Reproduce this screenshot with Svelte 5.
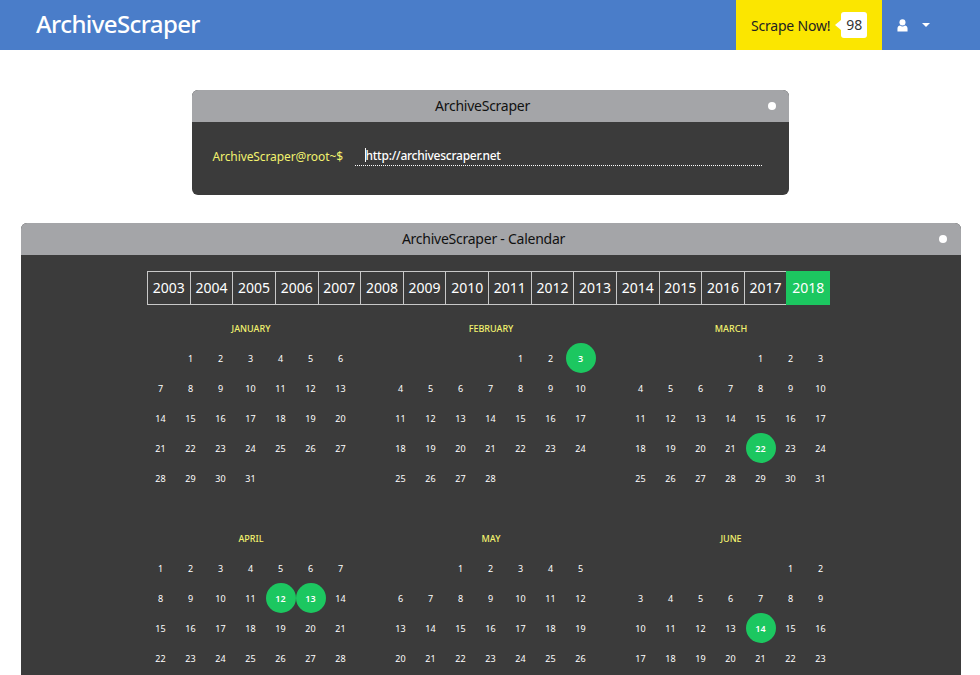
<script lang="ts">
	const years = Array.from({ length: 16 }, (_, i) => 2003 + i);
	const monthNames = ['January', 'February', 'March', 'April', 'May', 'June'];
	const marked: Record<number, number[]> = {
		1: [3],
		2: [22],
		3: [12, 13],
		5: [14]
	};

	function cells(month: number) {
		const blanks = new Date(2018, month, 1).getDay();
		const count = new Date(2018, month + 1, 0).getDate();
		return [
			...Array(blanks).fill(null),
			...Array.from({ length: count }, (_, i) => i + 1)
		];
	}
</script>

<nav class="navbar">
	<a class="brand" href="#top">ArchiveScraper</a>
	<div class="nav-right">
		<a class="scrape" href="#top">
			Scrape Now!
			<span class="badge">98</span>
		</a>
		<button class="user" aria-label="User menu">
			<svg class="user-icon" viewBox="0 0 12 14" width="11" height="13" aria-hidden="true">
				<circle cx="6" cy="3.6" r="3.3" />
				<path d="M0.5 13.5 V10.2 C0.5 8.2 2 7 3.4 7 C4.2 7.7 5 8 6 8 C7 8 7.8 7.7 8.6 7 C10 7 11.5 8.2 11.5 10.2 V13.5 Z" />
			</svg>
			<span class="caret"></span>
		</button>
	</div>
</nav>

<main class="page">
	<section class="terminal small">
		<header class="titlebar">
			<span>ArchiveScraper</span>
			<i class="dot"></i>
		</header>
		<div class="prompt-row">
			<span class="prompt">ArchiveScraper@root~$</span>
			<div class="url"><span class="cursor"></span>http://archivescraper.net</div>
		</div>
	</section>

	<section class="terminal wide">
		<header class="titlebar">
			<span>ArchiveScraper - Calendar</span>
			<i class="dot"></i>
		</header>
		<div class="calendar">
			<div class="years">
				{#each years as year}
					<a class="year" class:active={year === 2018} href="#top">{year}</a>
				{/each}
			</div>
			<div class="months">
				{#each monthNames as name, m}
					<div class="month">
						<div class="month-name">{name}</div>
						<div class="days">
							{#each cells(m) as day}
								<span class="day" class:hit={day && marked[m]?.includes(day)}>{day ?? ''}</span>
							{/each}
						</div>
					</div>
				{/each}
			</div>
		</div>
	</section>
</main>

<style>
	:global(body) {
		margin: 0;
		background: #fff;
		font-family: "Noto Sans", "Open Sans", sans-serif;
		overflow: hidden;
	}

	.navbar {
		display: flex;
		justify-content: space-between;
		height: 50px;
		background: #4a7dc9;
	}

	.brand {
		padding-left: 36px;
		line-height: 48px;
		font-size: 24px;
		font-weight: 500;
		letter-spacing: -0.6px;
		color: #fff;
		text-decoration: none;
	}

	.nav-right {
		display: flex;
	}

	.scrape {
		display: flex;
		align-items: center;
		width: 146px;
		box-sizing: border-box;
		padding-left: 15px;
		background: #fbe600;
		color: #222;
		font-size: 14px;
		letter-spacing: -0.2px;
		text-decoration: none;
	}

	.badge {
		position: relative;
		margin-left: 11px;
		width: 26px;
		height: 26px;
		line-height: 26px;
		text-align: center;
		background: #fff;
		border-radius: 3px;
		color: #333;
		letter-spacing: 0;
	}

	.badge::before {
		content: '';
		position: absolute;
		left: -6px;
		top: 8px;
		border: 5px solid transparent;
		border-left-width: 0;
		border-right: 6px solid #fff;
	}

	.user {
		display: flex;
		align-items: center;
		width: 98px;
		padding: 0 0 0 15px;
		border: 0;
		background: none;
	}

	.user-icon {
		fill: #fff;
	}

	.caret {
		margin-left: 14px;
		border-top: 4px solid #fff;
		border-left: 4.5px solid transparent;
		border-right: 4.5px solid transparent;
	}

	.page {
		display: flex;
		flex-direction: column;
		align-items: center;
		padding: 40px 19px 0 21px;
		gap: 28px;
	}

	.terminal {
		background: #3b3b3b;
		border-radius: 6px;
		overflow: hidden;
	}

	.small {
		width: 597px;
		height: 105px;
		margin-right: 2px;
	}

	.wide {
		width: 940px;
	}

	.titlebar {
		position: relative;
		height: 32px;
		padding-right: 15px;
		line-height: 32px;
		text-align: center;
		background: #a4a5a8;
		color: #111;
		font-size: 14px;
		letter-spacing: -0.25px;
	}

	.dot {
		position: absolute;
		right: 14px;
		top: 12px;
		width: 8px;
		height: 8px;
		border-radius: 50%;
		background: #fff;
	}

	.small .dot {
		right: 13px;
	}

	.prompt-row {
		display: flex;
		align-items: center;
		padding: 24px 27px 0 20px;
		font-size: 12px;
	}

	.prompt {
		width: 143px;
		padding-left: 1px;
		box-sizing: border-box;
		color: #f2f26e;
		letter-spacing: -0.1px;
	}

	.url {
		flex: 1;
		height: 19px;
		line-height: 19px;
		padding-left: 10px;
		border-bottom: 1px dotted #fff;
		color: #fff;
		font-weight: 500;
		letter-spacing: -0.25px;
	}

	.cursor {
		display: inline-block;
		width: 1px;
		height: 14px;
		background: #fff;
		vertical-align: -2px;
	}

	.calendar {
		padding: 16px 0 0;
	}

	.years {
		display: flex;
		width: 683px;
		margin-left: 126px;
	}

	.year {
		flex: 1;
		height: 32px;
		line-height: 32px;
		text-align: center;
		border: 1px solid #c8c8c8;
		border-left-width: 0;
		color: #fff;
		font-size: 14px;
		text-decoration: none;
	}

	.year:first-child {
		border-left-width: 1px;
	}

	.year.active {
		margin-left: -1px;
		padding-left: 1px;
		background: #1cc760;
		border-color: #1cc760;
	}

	.months {
		display: grid;
		grid-template-columns: repeat(3, 210px);
		column-gap: 30px;
		margin: 8px 0 0 125px;
	}

	.month {
		height: 210px;
	}

	.month-name {
		height: 30px;
		line-height: 32px;
		text-align: center;
		color: #f2f26e;
		font-size: 9px;
		font-weight: 500;
		text-transform: uppercase;
	}

	.days {
		display: grid;
		grid-template-columns: repeat(7, 30px);
		grid-auto-rows: 30px;
	}

	.day {
		line-height: 31px;
		padding-right: 1px;
		box-sizing: border-box;
		text-align: center;
		color: #fff;
		font-size: 9px;
	}

	.day.hit {
		background: #1cc760;
		border-radius: 50%;
		font-weight: 600;
	}
</style>
